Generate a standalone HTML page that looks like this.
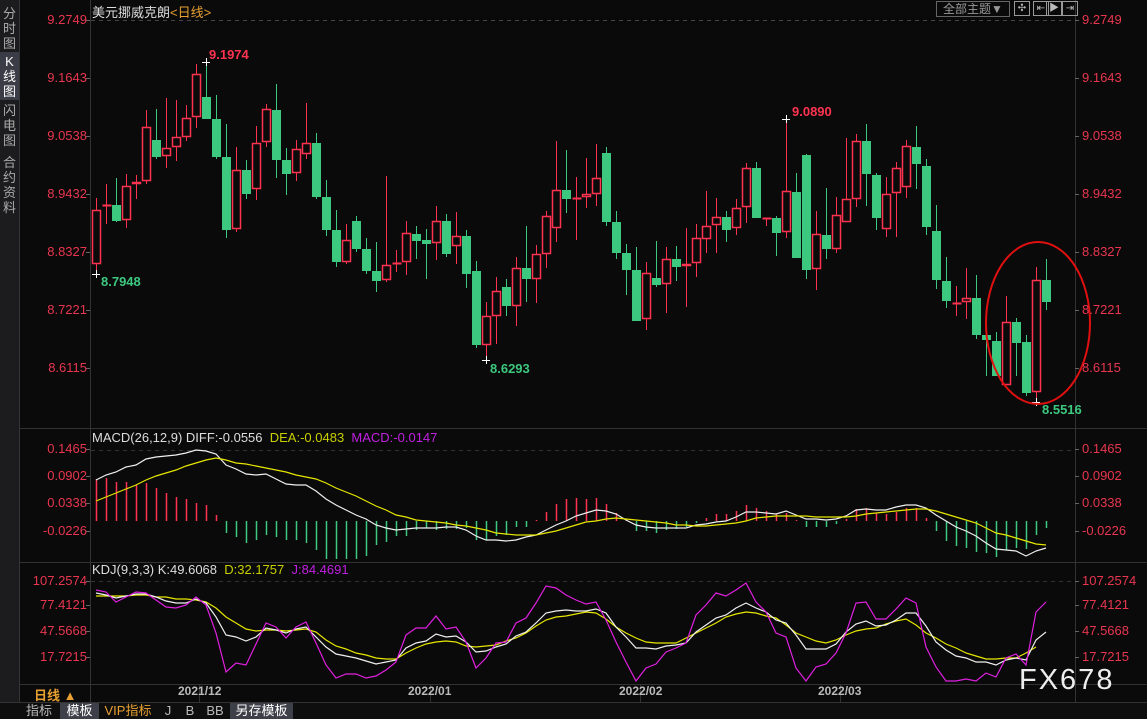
<!DOCTYPE html>
<html><head><meta charset="utf-8"><style>
html,body{margin:0;padding:0;background:#0a0a0a;width:1147px;height:718px;overflow:hidden;font-family:"Liberation Sans","Noto Sans CJK SC",sans-serif}
#side{position:absolute;left:0;top:0;width:19px;height:702px;background:#1c1c1e;border-right:1px solid #333}
.vt{position:absolute;left:0;width:19px;color:#aaa;font-size:13px;line-height:15px;text-align:center}
.t{position:absolute;white-space:nowrap;font-size:13px}
.ax{position:absolute;font-size:13px;color:#e8364f;white-space:nowrap}
#bot{position:absolute;left:0;top:702px;width:1147px;height:16px;background:#0e0e0e;border-top:1px solid #333}
.tab{position:absolute;top:0;height:16px;line-height:16px;font-size:13px;color:#bbb;text-align:center}
</style></head><body>
<svg id="sv" width="1147" height="718" style="position:absolute;left:0;top:0">
<line x1="90.5" y1="0" x2="90.5" y2="702" stroke="#333"/>
<line x1="1075.5" y1="0" x2="1075.5" y2="702" stroke="#333"/>
<line x1="19" y1="428.5" x2="1147" y2="428.5" stroke="#333"/>
<line x1="19" y1="562.5" x2="1147" y2="562.5" stroke="#333"/>
<line x1="19" y1="684.5" x2="1147" y2="684.5" stroke="#333"/>
<line x1="91" y1="20.5" x2="1075" y2="20.5" stroke="#444" stroke-dasharray="4,4"/>
<line x1="91" y1="450.5" x2="1075" y2="450.5" stroke="#333" stroke-dasharray="4,4"/>
<line x1="91" y1="581.5" x2="1075" y2="581.5" stroke="#333" stroke-dasharray="4,4"/>
<g id="g"></g>
<ellipse cx="1038" cy="323" rx="52" ry="81" fill="none" stroke="#e01010" stroke-width="2"/>
<circle cx="8" cy="568" r="3" fill="#ff2020"/>
<circle cx="8" cy="568" r="6" fill="none" stroke="#ff2020" stroke-dasharray="2,2"/>
</svg>
<div id="side">
<div class="vt" style="top:6px">分<br>时<br>图</div>
<div class="vt" style="top:52px;background:#3a3d45;color:#fff;height:46px;padding-top:2px">K<br>线<br>图</div>
<div class="vt" style="top:103px">闪<br>电<br>图</div>
<div class="vt" style="top:155px">合<br>约<br>资<br>料</div>
</div>
<div class="t" style="left:92px;top:2px;color:#ddd">美元挪威克朗<span style="color:#e8a030">&lt;日线&gt;</span></div>
<div class="t" style="left:936px;top:1px;width:72px;height:14px;border:1px solid #666;color:#999;font-size:12px;line-height:14px;text-align:center">全部主题▼</div>
<div class="t" style="left:1014px;top:1px;width:14px;height:13px;border:1px solid #999;color:#bbb;font-size:10px;line-height:13px;text-align:center">✣</div>
<div class="t" style="left:1033px;top:1px;width:14px;height:13px;border:1px solid #999;color:#bbb;font-size:10px;line-height:13px;text-align:center">⇤</div>
<div class="t" style="left:1046px;top:1px;width:14px;height:13px;border:1px solid #999;color:#bbb;font-size:10px;line-height:13px;text-align:center">▶</div>
<div class="t" style="left:1062px;top:1px;width:14px;height:13px;border:1px solid #999;color:#bbb;font-size:10px;line-height:13px;text-align:center">⇥</div>
<div id="axes"></div>
<div class="t" style="left:209px;top:47px;color:#ff3350;font-weight:bold">9.1974</div>
<div class="t" style="left:101px;top:274px;color:#3cc87e;font-weight:bold">8.7948</div>
<div class="t" style="left:490px;top:361px;color:#3cc87e;font-weight:bold">8.6293</div>
<div class="t" style="left:792px;top:104px;color:#ff3350;font-weight:bold">9.0890</div>
<div class="t" style="left:1042px;top:402px;color:#3cc87e;font-weight:bold">8.5516</div>
<div class="t" style="left:92px;top:430px;color:#ddd">MACD(26,12,9) DIFF:-0.0556 <span style="color:#c8d000">&nbsp;DEA:-0.0483</span> <span style="color:#c020e0">&nbsp;MACD:-0.0147</span></div>
<div class="t" style="left:92px;top:562px;color:#ddd">KDJ(9,3,3) K:49.6068 <span style="color:#c8d000">&nbsp;D:32.1757</span> <span style="color:#c020e0">&nbsp;J:84.4691</span></div>
<div class="t" style="left:34px;top:685px;color:#e8a030;font-weight:bold">日线 ▲</div>
<div class="t" style="left:178px;top:684px;color:#bbb;font-weight:bold;font-size:12px">2021/12</div>
<div class="t" style="left:408px;top:684px;color:#bbb;font-weight:bold;font-size:12px">2022/01</div>
<div class="t" style="left:619px;top:684px;color:#bbb;font-weight:bold;font-size:12px">2022/02</div>
<div class="t" style="left:818px;top:684px;color:#bbb;font-weight:bold;font-size:12px">2022/03</div>
<div class="t" style="left:1019px;top:664px;color:#eee;font-size:29px;letter-spacing:2px">FX678</div>
<div id="bot">
<div class="tab" style="left:20px;width:38px">指标</div>
<div class="tab" style="left:60px;width:39px;background:#3d4048;color:#fff">模板</div>
<div class="tab" style="left:100px;width:56px;color:#e8a030">VIP指标</div>
<div class="tab" style="left:158px;width:20px">J</div>
<div class="tab" style="left:180px;width:20px">B</div>
<div class="tab" style="left:202px;width:26px">BB</div>
<div class="tab" style="left:230px;width:63px;background:#3d4048;color:#fff">另存模板</div>
</div>
<script>
var NS="http://www.w3.org/2000/svg",g=document.getElementById("g");
function el(n,a){var e=document.createElementNS(NS,n);for(var k in a)e.setAttribute(k,a[k]);g.appendChild(e);return e;}
var R="#ff3350",G="#3cc87e";
var C=[[210,264,198,273,'r'],[205,205,184,224,'r'],[205,221,178,222,'g'],[186,220,174,228,'r'],[182,184,175,199,'r'],[127,181,110,184,'r'],[140,157,109,159,'g'],[148,156,98,168,'r'],[137,147,100,161,'r'],[118,137,105,141,'r'],[74,117,64,128,'r'],[97,119,62,119,'g'],[119,157,95,159,'g'],[157,230,124,238,'g'],[170,229,147,232,'r'],[170,194,160,199,'g'],[143,189,126,200,'r'],[109,142,104,147,'r'],[110,160,84,178,'g'],[160,174,148,195,'g'],[149,173,140,181,'r'],[143,154,103,159,'r'],[143,197,133,199,'g'],[197,230,180,236,'g'],[230,262,210,267,'g'],[240,262,224,264,'r'],[221,249,216,252,'g'],[249,271,238,274,'g'],[271,281,242,292,'g'],[265,280,176,282,'r'],[263,263,250,272,'r'],[233,262,221,275,'r'],[234,241,226,259,'g'],[240,244,229,279,'g'],[221,243,206,260,'r'],[221,254,214,257,'g'],[236,246,212,264,'r'],[236,274,230,288,'g'],[271,345,261,348,'g'],[316,345,302,360,'r'],[291,316,277,344,'r'],[287,306,279,316,'g'],[268,306,257,326,'r'],[268,279,226,302,'g'],[254,279,245,303,'r'],[216,254,211,268,'r'],[190,228,141,242,'r'],[190,199,150,213,'g'],[198,198,177,240,'r'],[194,197,158,208,'r'],[178,194,144,206,'r'],[153,222,147,226,'g'],[222,253,211,259,'g'],[253,270,244,295,'g'],[270,321,247,321,'g'],[273,319,262,330,'r'],[278,285,241,287,'g'],[259,284,247,313,'r'],[259,267,246,281,'g'],[264,266,228,307,'r'],[238,263,224,277,'r'],[226,239,191,253,'r'],[217,225,198,253,'r'],[217,230,211,242,'g'],[208,228,199,235,'r'],[168,207,163,223,'r'],[168,218,162,218,'g'],[218,218,218,226,'r'],[218,233,216,256,'g'],[191,232,119,238,'r'],[192,258,173,258,'g'],[155,270,154,279,'g'],[234,269,211,290,'r'],[235,249,188,259,'g'],[215,249,197,253,'r'],[199,222,138,222,'r'],[141,199,134,207,'r'],[141,174,124,206,'g'],[175,218,173,230,'g'],[194,229,177,237,'r'],[168,193,162,237,'r'],[146,187,140,198,'r'],[147,164,126,189,'g'],[166,227,159,235,'g'],[231,280,205,289,'g'],[281,301,257,308,'g'],[303,303,286,316,'r'],[298,302,268,319,'r'],[298,335,275,339,'g'],[335,340,335,376,'g'],[341,376,332,376,'g'],[322,385,296,385,'r'],[322,343,318,376,'g'],[342,393,335,396,'g'],[280,392,267,402,'r'],[280,302,259,310,'g']];
C.forEach(function(c,i){var x=96+10*i+.5,col=c[4]=='r'?R:G;
el("line",{x1:x,x2:x,y1:c[2],y2:c[3],stroke:col});
if(c[1]-c[0]<2){el("line",{x1:x-4,x2:x+5,y1:c[0]+.5,y2:c[0]+.5,stroke:col,"stroke-width":2});}
else if(c[4]=='r'){el("rect",{x:x-4,y:c[0]+.5,width:8,height:c[1]-c[0]-1,fill:"#0a0a0a",stroke:col,"stroke-width":1.5});}
else el("rect",{x:x-4.5,y:c[0],width:9,height:c[1]-c[0],fill:col});});
[[206,62],[96,274],[486,360],[786,119],[1036,402]].forEach(function(p){el("path",{d:"M"+(p[0]-4)+" "+(p[1]+.5)+"h8M"+(p[0]+.5)+" "+(p[1]-4)+"v8",stroke:"#fff"});});
var M=[-42,-43,-39,-39,-36,-38,-33,-28,-24,-22,-18,-16,-6,12,16,22,19,14,16,19,19,22,29,38,38,38,38,35,24,21,15,15,9,7,9,8,8,7,19,19,15,14,6,6,-1,-9,-17,-22,-23,-22,-23,-17,-8,-1,10,10,12,9,8,6,2,-3,-7,-7,-10,-16,-13,-10,-7,-8,-1,6,6,6,3,-2,-12,-13,-8,-7,-9,-13,-13,-3,10,20,25,27,31,32,36,29,27,28,14,7];
M.forEach(function(v,i){var x=96+10*i+.5;el("line",{x1:x,x2:x,y1:521,y2:521+v,stroke:v<0?R:G,"stroke-width":1.5});});
function pl(xs,ys,col){var p=[];ys.forEach(function(y,i){if(i<96)p.push((xs+10*i)+","+y)});el("polyline",{points:p.join(" "),fill:"none",stroke:col,"stroke-width":1.2});}
var DIFF=[480,475,472,467,465,459,457,456,455,453,450,451,454,465,469,474,475,474,479,484,485,485,491,499,505,510,515,519,525,528,530,529,528,528,528,527,527,530,536,540,540,541,540,537,535,530,525,521,516,513,510,511,514,520,525,527,528,528,528,528,525,524,522,521,517,512,512,513,514,511,515,519,519,520,519,516,510,509,510,510,507,505,505,508,515,521,527,531,536,543,549,550,551,556,551,548];
pl(96,DIFF,"#f0f0f0");
var DEA=[501,497,493,489,485,480,476,473,470,466,463,460,458,460,463,464,466,468,470,472,475,477,479,483,488,492,496,501,506,510,515,517,520,521,522,523,525,526,528,530,533,534,535,535,535,533,531,528,525,522,521,519,518,519,520,521,522,523,525,525,526,526,525,524,523,521,518,517,516,516,516,516,517,517,517,517,516,514,513,512,511,510,509,509,511,514,517,520,523,528,533,535,538,541,544,545];
pl(96,DEA,"#e6e600");
var K=[593,595,598,596,594,594,597,601,603,603,599,603,617,635,637,641,637,628,630,633,629,627,637,647,654,656,658,661,664,662,660,648,643,641,634,637,636,642,652,651,647,644,636,632,623,613,611,610,611,611,609,613,627,637,648,648,649,646,645,643,632,625,618,615,608,603,608,612,620,623,635,649,649,649,644,632,624,621,626,625,620,613,613,626,642,650,656,658,662,662,665,660,658,660,640,632];
var D=[596,596,596,596,595,595,597,597,599,599,600,602,608,617,623,629,631,630,630,631,630,629,632,640,646,649,653,655,658,659,659,653,648,644,642,641,642,646,647,646,645,641,638,633,626,620,617,616,614,612,613,619,627,633,638,642,643,643,643,638,633,628,623,617,614,612,613,616,618,625,633,637,641,643,640,635,631,629,628,624,621,619,625,633,638,644,648,653,656,659,659,658,658,653,647];
var J=[590,592,602,597,592,593,600,607,608,605,597,605,633,672,663,665,644,623,627,638,627,622,643,665,678,674,674,678,676,670,662,635,628,628,616,629,627,642,668,658,643,642,623,618,603,586,588,595,600,604,602,620,642,662,681,668,664,652,648,643,615,605,593,596,590,583,602,612,633,637,668,681,667,664,653,633,603,602,619,619,609,598,603,647,667,681,681,679,681,673,677,658,654,665,612,602];
pl(96,D,"#e6e600");pl(96,K,"#f0f0f0");pl(96,J,"#e020e0");
var A=[["9.2749",20],["9.1643",78],["9.0538",136],["8.9432",194],["8.8327",252],["8.7221",310],["8.6115",368],["0.1465",449],["0.0902",476],["0.0338",503],["-0.0226",531],["107.2574",581],["77.4121",605],["47.5668",631],["17.7215",657]];
var h="";A.forEach(function(a){h+='<div class="ax" style="right:1060px;top:'+(a[1]-8)+'px">'+a[0]+'</div><div class="ax" style="left:1082px;top:'+(a[1]-8)+'px">'+a[0]+'</div>';
el("line",{x1:86,x2:90,y1:a[1]+.5,y2:a[1]+.5,stroke:"#666"});el("line",{x1:1075,x2:1079,y1:a[1]+.5,y2:a[1]+.5,stroke:"#666"});});
document.getElementById("axes").innerHTML=h;
[199,430,640,840].forEach(function(x){el("line",{x1:x+.5,x2:x+.5,y1:685,y2:702,stroke:"#333"})});
</script>
</body></html>
